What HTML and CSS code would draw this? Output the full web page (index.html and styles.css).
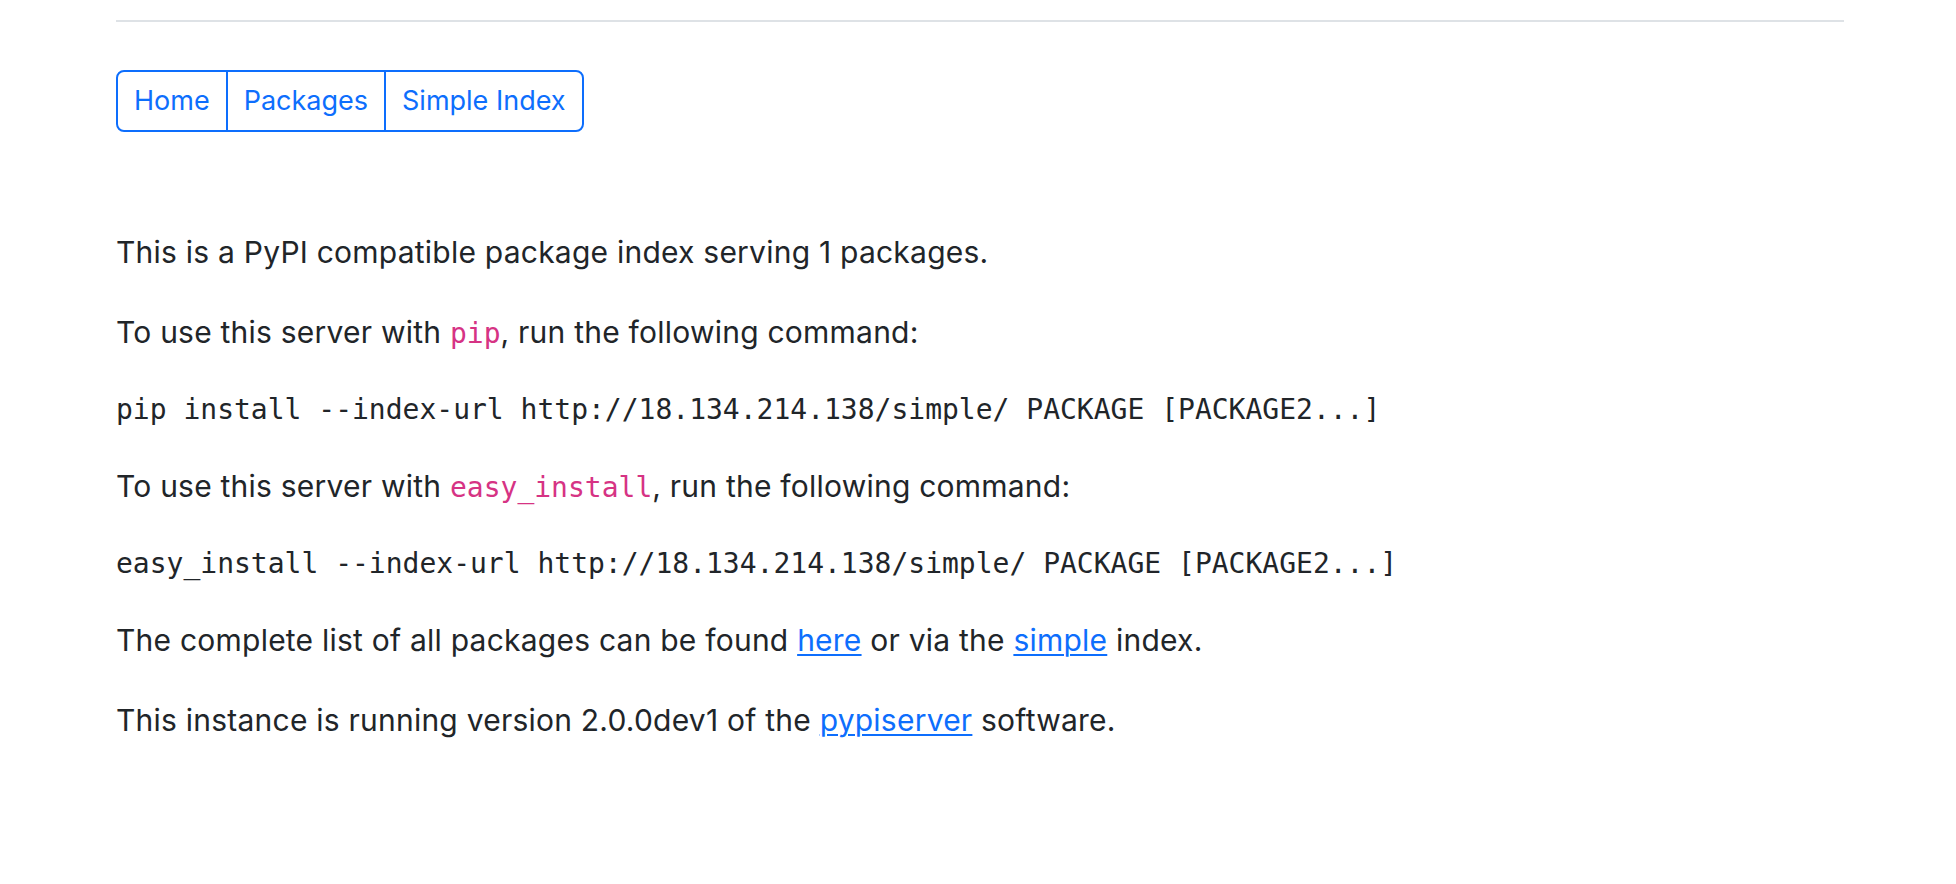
FILE: index.html
```html
<!DOCTYPE html>
<html lang="en">
<head>
<meta charset="utf-8">
<title>Welcome to pypiserver!</title>
<link rel="stylesheet" href="styles.css">
</head>
<body>
<div class="container">
  <hr class="rule">
  <nav class="btn-group">
    <a class="btn" href="#">Home</a>
    <a class="btn" href="#">Packages</a>
    <a class="btn" href="#">Simple Index</a>
  </nav>
  <main class="content">
    <p>This is a PyPI compatible package index serving 1 packages.</p>
    <p>To use this server with <code>pip</code>, run the following command:</p>
    <pre>pip install --index-url http://18.134.214.138/simple/ PACKAGE [PACKAGE2...]</pre>
    <p>To use this server with <code>easy_install</code>, run the following command:</p>
    <pre>easy_install --index-url http://18.134.214.138/simple/ PACKAGE [PACKAGE2...]</pre>
    <p>The complete list of all packages can be found <a href="#">here</a> or via the <a href="#">simple</a> index.</p>
    <p>This instance is running version 2.0.0dev1 of the <a href="#">pypiserver</a> software.</p>
  </main>
</div>
</body>
</html>
```

FILE: styles.css
```css
* { box-sizing: border-box; }
html, body { margin: 0; padding: 0; background: #fff; }
body {
  font-family: "Inter", "Liberation Sans", sans-serif;
  font-size: 30px;
  line-height: 48px;
  letter-spacing: 0.23px;
  color: #212529;
}
.container {
  width: 1728px;
  margin-left: 116px;
}
.rule {
  margin: 20px 0 0 0;
  border: 0;
  border-top: 2px solid #dee2e6;
  height: 0;
}
.btn-group {
  display: inline-flex;
  margin-top: 48px;
}
.btn {
  display: block;
  font-size: 27px;
  line-height: 42px;
  letter-spacing: 0;
  padding: 8px 16px;
  color: #0d6efd;
  text-decoration: none;
  border: 2px solid #0d6efd;
  margin-left: -2px;
}
.btn:first-child { margin-left: 0; border-radius: 8px 0 0 8px; }
.btn:last-child { border-radius: 0 8px 8px 0; }
.content { padding-top: 96px; }
p { margin: 0 0 32px 0; }
code, pre {
  font-family: "DejaVu Sans Mono", "Liberation Mono", monospace;
  font-size: 28px;
  letter-spacing: 0;
}
code { color: #d63384; }
pre { margin: 0 0 32px 0; line-height: 40px; color: #212529; }
a { color: #0d6efd; text-decoration-thickness: 2px; text-underline-offset: 3px; }
```
